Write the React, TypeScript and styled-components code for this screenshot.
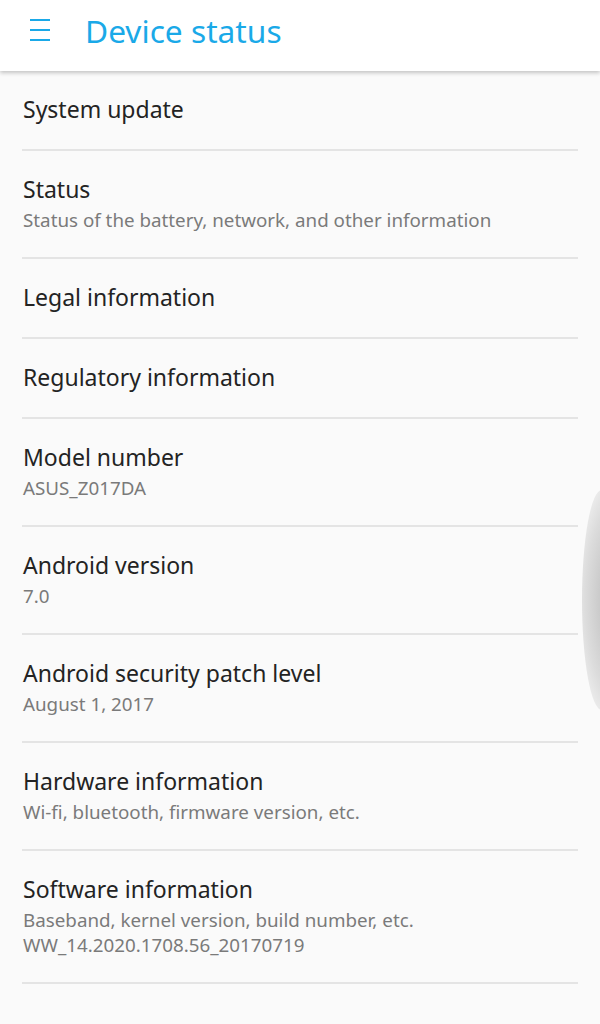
import React, { FC } from 'react';
import styled, { createGlobalStyle } from 'styled-components';

const GlobalStyle = createGlobalStyle`
  html, body {
    margin: 0;
    padding: 0;
    background: #fafafa;
  }
  body {
    font-family: "Noto Sans", "Open Sans", "Liberation Sans", sans-serif;
  }
`;

const Screen = styled.div`
  position: relative;
  width: 600px;
  height: 1024px;
  overflow: hidden;
  background: #fafafa;
`;

const Header = styled.header`
  position: relative;
  z-index: 2;
  height: 71px;
  display: flex;
  align-items: center;
  padding-bottom: 11px;
  box-sizing: border-box;
  background: #ffffff;
  box-shadow: 0 2px 4px rgba(0, 0, 0, 0.22);
`;

const MenuBtn = styled.div`
  width: 20px;
  margin-left: 30px;
  margin-right: 35px;
  display: flex;
  flex-direction: column;
  gap: 8px;

  & > span {
    display: block;
    height: 2px;
    background: #1aa9e8;
  }
`;

const Title = styled.h1`
  margin: 0;
  font-size: 31.7px;
  font-weight: 400;
  color: #1aa9e8;
`;

const List = styled.ul`
  list-style: none;
  margin: 0;
  padding: 0 22px;
`;

const Row = styled.li`
  padding: 23px 1px 24px;
  border-bottom: 2px solid #e4e4e4;
`;

const RowTitle = styled.div`
  font-size: 23px;
  line-height: 31px;
  color: #232323;
`;

const RowSub = styled.div`
  font-size: 18.8px;
  line-height: 25px;
  color: #7a7a7a;

  ${RowTitle} + & {
    margin-top: 3px;
  }
`;

// 오른쪽 가장자리에 보이는 회색 스크롤 그림자
const EdgeGlow = styled.div`
  position: absolute;
  top: 490px;
  right: -22px;
  width: 40px;
  height: 220px;
  border-radius: 50%;
  background: radial-gradient(ellipse at 100% 50%, #c4c4c4 30%, #dcdcdc 65%, rgba(250, 250, 250, 0) 100%);
`;

interface Item {
  title: string;
  lines?: string[];
}

const items: Item[] = [
  { title: 'System update' },
  { title: 'Status', lines: ['Status of the battery, network, and other information'] },
  { title: 'Legal information' },
  { title: 'Regulatory information' },
  { title: 'Model number', lines: ['ASUS_Z017DA'] },
  { title: 'Android version', lines: ['7.0'] },
  { title: 'Android security patch level', lines: ['August 1, 2017'] },
  { title: 'Hardware information', lines: ['Wi-fi, bluetooth, firmware version, etc.'] },
  {
    title: 'Software information',
    lines: ['Baseband, kernel version, build number, etc.', 'WW_14.2020.1708.56_20170719'],
  },
];

const App: FC = () => (
  <Screen>
    <GlobalStyle />
    <Header>
      <MenuBtn>
        <span />
        <span />
        <span />
      </MenuBtn>
      <Title>Device status</Title>
    </Header>
    <List>
      {items.map((v) => (
        <Row key={v.title}>
          <RowTitle>{v.title}</RowTitle>
          {v.lines && v.lines.map((l) => <RowSub key={l}>{l}</RowSub>)}
        </Row>
      ))}
    </List>
    <EdgeGlow />
  </Screen>
);

export default App;
